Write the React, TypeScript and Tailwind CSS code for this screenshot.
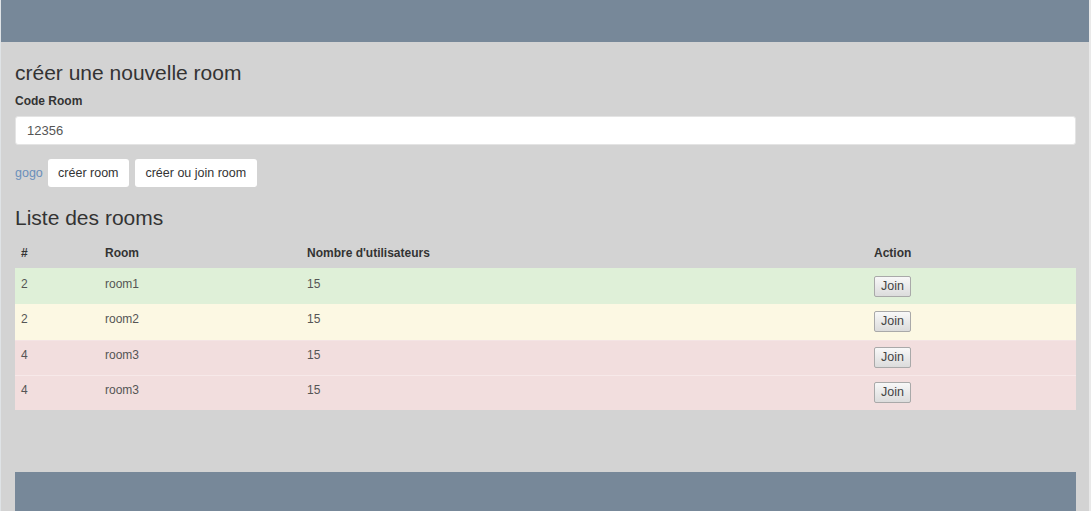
import React from "react";

const rows = [
  { id: "2", room: "room1", n: "15", bg: "bg-[#dff0d8]", h: "h-[36px]", border: "", pt: "pt-[8px]" },
  { id: "2", room: "room2", n: "15", bg: "bg-[#fcf8e3]", h: "h-[36px]", border: "", pt: "pt-[7px]" },
  { id: "4", room: "room3", n: "15", bg: "bg-[#f2dede]", h: "h-[35px]", border: "border-t border-[#f4e4e4]", pt: "pt-[6px]" },
  { id: "4", room: "room3", n: "15", bg: "bg-[#f2dede]", h: "h-[35px]", border: "border-t border-[#f7e9e9]", pt: "pt-[6px]" },
];

export default function App() {
  return (
    <div className="flex flex-col h-[511px] overflow-hidden bg-[#d3d3d3] border-l border-l-[#dfe3e6] border-r-2 border-r-[#e9e9e9] font-['Liberation_Sans',Arial,sans-serif] text-[#333]">
      <div className="h-[42px] shrink-0 bg-[#778899]" />
      <div className="flex flex-col flex-1 pl-[14px] pr-[13px]">
        <h3 className="mt-[20px] text-[21px] leading-[22px] text-[#333]">créer une nouvelle room</h3>
        <label className="mt-[9px] text-[12px] leading-[17px] font-bold text-[#333]">Code Room</label>
        <div className="mt-[6px] h-[29px] bg-white rounded-[3px] border border-[#e4e4e4] flex items-center pl-[11px] text-[13px] text-[#555]">
          12356
        </div>
        <div className="mt-[14px] flex items-center h-[28px]">
          <span className="text-[12.5px] text-[#6a8fba] mr-[5px]">gogo</span>
          <button className="h-[28px] w-[81px] bg-white rounded-[3px] text-[12.5px] text-[#333] mr-[6px]">créer room</button>
          <button className="h-[28px] w-[122px] bg-white rounded-[3px] text-[12.5px] text-[#333]">créer ou join room</button>
        </div>
        <h3 className="mt-[20px] text-[21px] leading-[22px] text-[#333]">Liste des rooms</h3>
        <div className="mt-[10px] text-[12px] leading-[17px]">
          <div className="flex h-[29px] items-end pb-[6px] font-bold text-[#333]">
            <div className="w-[84px] pl-[6px]">#</div>
            <div className="w-[202px] pl-[6px]">Room</div>
            <div className="w-[567px] pl-[6px]">Nombre d'utilisateurs</div>
            <div className="flex-1 pl-[6px]">Action</div>
          </div>
          {rows.map((r, i) => (
            <div key={i} className={`flex ${r.h} ${r.bg} ${r.border} text-[#555]`}>
              <div className={`w-[84px] pl-[6px] ${r.pt}`}>{r.id}</div>
              <div className={`w-[202px] pl-[6px] ${r.pt}`}>{r.room}</div>
              <div className={`w-[567px] pl-[6px] ${r.pt}`}>{r.n}</div>
              <div className={`flex-1 pl-[6px] ${r.pt}`}>
                <button className="h-[21px] w-[37px] rounded-[2px] border border-[#a9a9a9] bg-gradient-to-b from-[#f8f8f8] to-[#dcdcdc] text-[12.5px] text-[#444] leading-none">
                  Join
                </button>
              </div>
            </div>
          ))}
        </div>
        <div className="mt-[62px] flex-1 bg-[#778899]" />
      </div>
    </div>
  );
}
